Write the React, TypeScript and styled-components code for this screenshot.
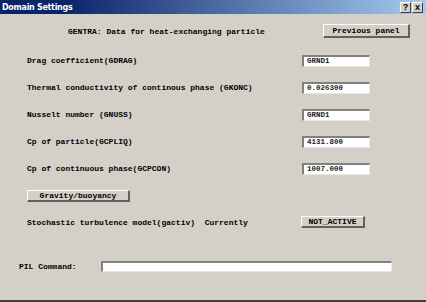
import { Fragment } from "react"
import styled, { createGlobalStyle } from "styled-components"

const GlobalStyle = createGlobalStyle`
  html, body {
    margin: 0;
    padding: 0;
    background: #d4d0c8;
  }
  * {
    box-sizing: border-box;
  }
`;

const Window = styled.div`
  width: 426px;
  height: 302px;
  display: flex;
  flex-direction: column;
  background: #d4d0c8;
  border-bottom: 2px solid #404040;
  font-family: "Liberation Mono", "Courier New", monospace;
  font-weight: 700;
  font-size: 8px;
  color: #000;
  overflow: hidden;
`;

const TitleBar = styled.div`
  height: 14px;
  display: flex;
  align-items: center;
  padding: 0 3px 0 2px;
  background: linear-gradient(to right, #0a246a 15%, #a6caf0);
`;

const Caption = styled.span`
  font-family: "DejaVu Sans", "Liberation Sans", sans-serif;
  font-weight: 700;
  font-size: 8px;
  letter-spacing: -0.3px;
  color: #fff;
  flex: 1;
`;

const TitleButton = styled.div`
  width: 11px;
  height: 11px;
  margin-left: 1px;
  display: flex;
  align-items: center;
  justify-content: center;
  background: #d4d0c8;
  border-top: 1px solid #fff;
  border-left: 1px solid #fff;
  border-right: 1px solid #404040;
  border-bottom: 1px solid #404040;
  font-family: "Liberation Sans", sans-serif;
  font-weight: 700;
  font-size: 9px;
  line-height: 1;
  color: #000;
`;

const Body = styled.div`
  flex: 1;
  display: flex;
  flex-direction: column;
`;

const HeaderRow = styled.div`
  margin-top: 10px;
  height: 14px;
  display: flex;
  align-items: center;
  padding: 0 16px 0 68px;
`;

const Heading = styled.span`
  flex: 1;
`;

const Button = styled.div<{ $width: number; $height?: number }>`
  width: ${p => p.$width}px;
  height: ${p => p.$height ?? 12}px;
  display: flex;
  align-items: center;
  justify-content: center;
  background: #d4d0c8;
  border-top: 1px solid #fff;
  border-left: 1px solid #fff;
  border-right: 2px solid #606060;
  border-bottom: 2px solid #606060;
  white-space: pre;
`;

const Fields = styled.div`
  margin-top: 9px;
  display: grid;
  grid-template-columns: 275px 68px;
  grid-auto-rows: 27px;
  align-items: center;
  padding-left: 27px;
`;

const Label = styled.span`
  white-space: pre;
`;

const Input = styled.div<{ $width: number; $height?: number }>`
  width: ${p => p.$width}px;
  height: ${p => p.$height ?? 12}px;
  display: flex;
  align-items: center;
  padding-left: 3px;
  background: #fff;
  border-top: 2px solid #808080;
  border-left: 2px solid #808080;
  border-right: 1px solid #e8e8e8;
  border-bottom: 1px solid #e8e8e8;
  font-size: 7.5px;
  color: #222;
`;

const GravityRow = styled.div`
  margin-top: 8px;
  padding-left: 27px;
  display: flex;
`;

const StochasticRow = styled.div`
  margin-top: 14px;
  padding-left: 27px;
  display: grid;
  grid-template-columns: 274px 64px;
  align-items: center;
`;

const CommandRow = styled.div`
  margin-top: 33px;
  padding-left: 19px;
  display: grid;
  grid-template-columns: 82px 291px;
  align-items: center;
`;

const fields = [
  { label: "Drag coefficient(GDRAG)", value: "GRND1" },
  { label: "Thermal conductivity of continous phase (GKONC)", value: "0.026300" },
  { label: "Nusselt number (GNUSS)", value: "GRND1" },
  { label: "Cp of particle(GCPLIQ)", value: "4131.800" },
  { label: "Cp of continuous phase(GCPCON)", value: "1007.000" },
];

const App = () => {
  return (
    <>
      <GlobalStyle />
      <Window>
        <TitleBar>
          <Caption>Domain Settings</Caption>
          <TitleButton>?</TitleButton>
          <TitleButton>x</TitleButton>
        </TitleBar>
        <Body>
          <HeaderRow>
            <Heading>GENTRA: Data for heat-exchanging particle</Heading>
            <Button $width={87} $height={14}>Previous panel</Button>
          </HeaderRow>
          <Fields>
            {fields.map((item) => (
              <Fragment key={item.label}>
                <Label>{item.label}</Label>
                <Input $width={68}>{item.value}</Input>
              </Fragment>
            ))}
          </Fields>
          <GravityRow>
            <Button $width={103}>Gravity/buoyancy</Button>
          </GravityRow>
          <StochasticRow>
            <Label>Stochastic turbulence model(gactiv)  Currently</Label>
            <Button $width={64}>NOT_ACTIVE</Button>
          </StochasticRow>
          <CommandRow>
            <Label>PIL Command:</Label>
            <Input $width={291} $height={11} />
          </CommandRow>
        </Body>
      </Window>
    </>
  )
}

export default App;
